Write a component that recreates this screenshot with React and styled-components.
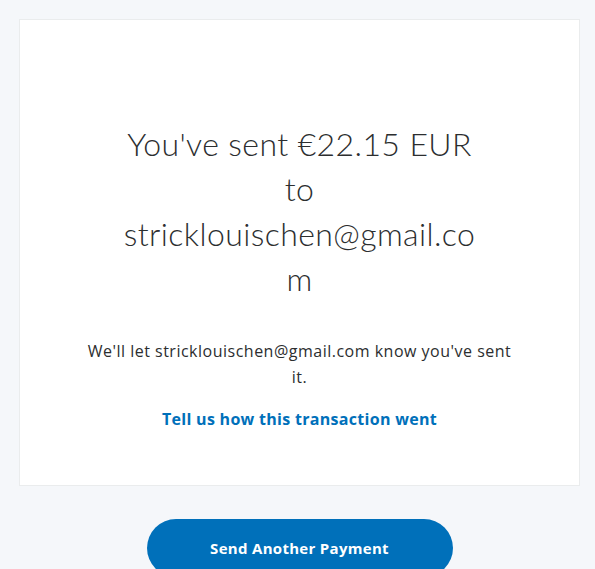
import React from 'react';
import styled, { createGlobalStyle } from 'styled-components';

const GlobalStyle = createGlobalStyle`
    html, body {
        margin: 0;
        padding: 0;
        background: #f5f7fa;
    }
    body {
        font-family: "Open Sans", "Liberation Sans", sans-serif;
        color: #2c2e2f;
    }
`;

const Page = styled.div`
    padding: 19px 15px 0 19px;
    display: flex;
    flex-direction: column;
    align-items: center;
`;

const Card = styled.section`
    box-sizing: border-box;
    width: 100%;
    height: 467px;
    background: #ffffff;
    border: 1px solid #eaeced;
    display: flex;
    flex-direction: column;
    align-items: center;
    padding-top: 101px;
    text-align: center;
`;

const Heading = styled.h1`
    margin: 0;
    width: 360px;
    font-family: Lato, "Liberation Sans", sans-serif;
    font-size: 32px;
    font-weight: 300;
    letter-spacing: 0.4px;
    line-height: 45px;
    color: #2c2e2f;
    overflow-wrap: anywhere;
`;

const Note = styled.p`
    margin: 37px 0 0;
    width: 432px;
    font-size: 16px;
    letter-spacing: 0.5px;
    line-height: 26px;
    color: #2c2e2f;
`;

const FeedbackLink = styled.a`
    margin-top: 17px;
    font-size: 16px;
    letter-spacing: 0.3px;
    line-height: 24px;
    font-weight: 700;
    color: #0070ba;
    text-decoration: none;
    cursor: pointer;
`;

const Button = styled.button`
    margin-top: 33px;
    width: 306px;
    height: 58px;
    border: none;
    border-radius: 29px;
    background: #0070ba;
    color: #ffffff;
    font-family: "Open Sans", "Liberation Sans", sans-serif;
    font-size: 15px;
    letter-spacing: 0.3px;
    font-weight: 700;
    cursor: pointer;
`;

export default function App() {
    return (
        <>
            <GlobalStyle />
            <Page>
                <Card>
                    <Heading>You've sent €22.15 EUR to stricklouischen@gmail.com</Heading>
                    <Note>We'll let stricklouischen@gmail.com know you've sent it.</Note>
                    <FeedbackLink>Tell us how this transaction went</FeedbackLink>
                </Card>
                <Button>Send Another Payment</Button>
            </Page>
        </>
    );
}
